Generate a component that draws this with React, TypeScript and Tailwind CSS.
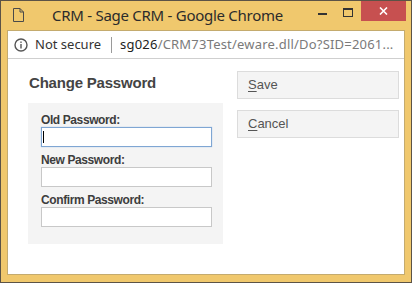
import React from 'react';

const uiFont = { fontFamily: '"Noto Sans", "Open Sans", sans-serif' };
const pageFont = { fontFamily: '"Liberation Sans", Arial, sans-serif' };

const DocIcon = () => (
  <svg width="11" height="14" viewBox="0 0 11 14" className="shrink-0">
    <path d="M0.5 0.5 H7 L10.5 4 V13.5 H0.5 Z M7 0.5 V4 H10.5" fill="none" stroke="#4a4a4a" strokeWidth="1" />
  </svg>
);

const InfoIcon = () => (
  <svg width="14" height="14" viewBox="0 0 14 14" className="shrink-0">
    <circle cx="7" cy="7" r="6" fill="none" stroke="#555" strokeWidth="1.4" />
    <rect x="6.3" y="6" width="1.4" height="4.5" fill="#555" />
    <rect x="6.3" y="3.5" width="1.4" height="1.4" fill="#555" />
  </svg>
);

const Field: React.FC<{ label: string; focused?: boolean; first?: boolean }> = ({ label, focused, first }) => (
  <div className={first ? '' : 'mt-[6px]'}>
    <div className="h-[14px] text-[12px] leading-[14px] font-bold tracking-[-0.4px] text-[#3d3d3d]">{label}</div>
    <div
      className={`relative h-[20px] w-[171px] bg-white border ${
        focused ? 'border-[#7fa6d3] shadow-[0_0_1px_#9dbde3]' : 'border-[#c8c8c8]'
      }`}
    >
      {focused && <div className="absolute left-[1px] top-[3px] h-[12px] w-px bg-black" />}
    </div>
  </div>
);

const FormButton: React.FC<{ label: string }> = ({ label }) => (
  <div className="h-[28px] w-[162px] bg-[#f4f4f4] border border-[#dcdcdc] flex items-center pl-[10px] text-[13px] text-[#555]">
    <span>
      <span className="underline underline-offset-2">{label[0]}</span>
      {label.slice(1)}
    </span>
  </div>
);

export default function App() {
  return (
    <div className="w-[412px] h-[283px] border border-[#5c5346] bg-[#f0c86d] flex flex-col overflow-hidden">
      {/* Title bar */}
      <div className="h-[29px] flex items-start relative" style={uiFont}>
        <div className="ml-[12px] mt-[7px]">
          <DocIcon />
        </div>
        <div className="ml-[28px] mt-[4px] text-[15px] leading-[20px] tracking-[-0.27px] text-[#2b2b2b]">
          CRM - Sage CRM - Google Chrome
        </div>
        <div className="ml-auto flex items-start mr-[5px]">
          <div className="w-[26px] h-[20px] flex items-start justify-center">
            <div className="mt-[12px] w-[9px] h-[2px] bg-[#333]" />
          </div>
          <div className="w-[26px] h-[20px] flex items-start justify-center">
            <div className="mt-[7px] w-[10px] h-[9px] border border-t-2 border-[#333]" />
          </div>
          <div className="w-[45px] h-[20px] bg-[#c75050] flex items-center justify-center">
            <svg width="9" height="8" viewBox="0 0 9 8">
              <path d="M1 0.5 L8 7.5 M8 0.5 L1 7.5" stroke="#fff" strokeWidth="1.6" />
            </svg>
          </div>
        </div>
      </div>

      {/* Client area */}
      <div className="flex-1 mx-[6px] mb-[7px] border border-[#c4ab6e] bg-white flex flex-col">
        <div className="h-[28px] border-b border-[#cfcfcf] flex items-center pl-[6px]" style={uiFont}>
          <InfoIcon />
          <span className="ml-[7px] text-[13px] text-[#333]">Not secure</span>
          <span className="ml-[10px] h-[16px] w-px bg-[#9a9a9a]" />
          <span className="ml-[8px] text-[13px] text-[#222] tracking-[0.2px]">
            sg026<span className="text-[#7a7a7a]">/CRM73Test/eware.dll/Do?SID=2061...</span>
          </span>
        </div>

        <div className="flex-1 flex pl-[20px] pt-[12px]" style={pageFont}>
          <div className="flex flex-col">
            <div className="ml-[1px] mt-[3px] h-[18px] text-[15px] leading-[18px] font-bold tracking-[-0.2px] text-[#444]">
              Change Password
            </div>
            <div className="mt-[11px] w-[195px] bg-[#f4f4f4] pl-[13px] pt-[10px] pb-[17px]">
              <Field label="Old Password:" focused first />
              <Field label="New Password:" />
              <Field label="Confirm Password:" />
            </div>
          </div>
          <div className="ml-[14px] flex flex-col gap-[11px]">
            <FormButton label="Save" />
            <FormButton label="Cancel" />
          </div>
        </div>
      </div>
    </div>
  );
}
